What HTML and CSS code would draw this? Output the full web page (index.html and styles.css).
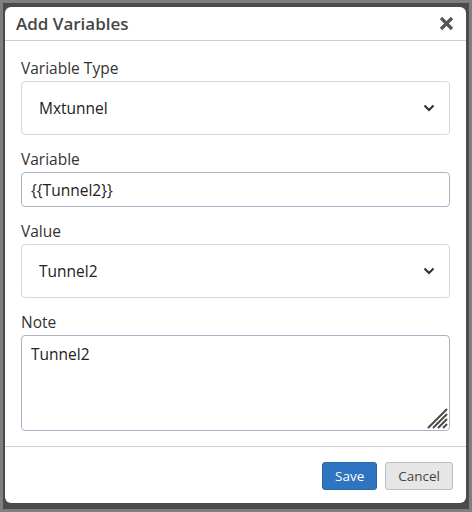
FILE: index.html
```html
<!DOCTYPE html>
<html lang="en">
<head>
    <meta charset="UTF-8">
    <meta name="viewport" content="width=device-width, initial-scale=1.0">
    <title>Add Variables</title>
    <link rel="stylesheet" href="styles.css">
</head>
<body>
    <div class="backdrop">
        <div class="modal">
            <div class="modal-header">
                <h2>Add Variables</h2>
                <svg class="close" width="15" height="15" viewBox="0 0 15 15"><path d="M2 2 L13 13 M13 2 L2 13" stroke="#555" stroke-width="3.2"/></svg>
            </div>

            <div class="modal-body">
                <div class="field">
                    <label>Variable Type</label>
                    <div class="select">
                        <span>Mxtunnel</span>
                        <svg class="chevron" width="12" height="8" viewBox="0 0 12 8"><path d="M1.5 1.5 L6 6 L10.5 1.5" fill="none" stroke="#2b2f3a" stroke-width="2"/></svg>
                    </div>
                </div>

                <div class="field">
                    <label>Variable</label>
                    <div class="input">{{Tunnel2}}</div>
                </div>

                <div class="field">
                    <label>Value</label>
                    <div class="select">
                        <span>Tunnel2</span>
                        <svg class="chevron" width="12" height="8" viewBox="0 0 12 8"><path d="M1.5 1.5 L6 6 L10.5 1.5" fill="none" stroke="#2b2f3a" stroke-width="2"/></svg>
                    </div>
                </div>

                <div class="field">
                    <label>Note</label>
                    <div class="textarea">
                        Tunnel2
                        <svg class="grip" width="22" height="22" viewBox="0 0 22 22">
                            <path d="M21 2 L2 21 M21 7 L7 21 M21 12 L12 21 M21 17 L17 21" stroke="#4a4a4a" stroke-width="2"/>
                        </svg>
                    </div>
                </div>
            </div>

            <div class="modal-footer">
                <button class="btn btn-primary">Save</button>
                <button class="btn btn-default">Cancel</button>
            </div>
        </div>
    </div>
</body>
</html>
```

FILE: styles.css
```css
html, body {
    margin: 0;
    height: 100%;
}
body {
    font-family: 'Open Sans', 'Liberation Sans', sans-serif;
    background-color: #7f7f7f;
    padding: 3px;
    box-sizing: border-box;
}
.backdrop {
    background-color: #4b4b4b;
    height: 100%;
    padding: 4px 3px 6px 2px;
    box-sizing: border-box;
}
.modal {
    background: white;
    border-radius: 6px;
    height: 100%;
    display: flex;
    flex-direction: column;
}
.modal-header {
    display: flex;
    align-items: center;
    justify-content: space-between;
    height: 33px;
    padding: 0 12px 0 11px;
    border-bottom: 1px solid #cfcfcf;
}
.modal-header h2 {
    margin: 0;
    font-size: 17px;
    font-weight: 600;
    color: #474747;
}
.modal-body {
    padding: 17px 16px 15px 16px;
    border-bottom: 1px solid #d0d0d0;
}
.field {
    margin-bottom: 14px;
}
.field:last-child {
    margin-bottom: 0;
}
label {
    display: block;
    font-size: 15.5px;
    color: #333;
    line-height: 20px;
    margin-bottom: 3px;
}
.select {
    height: 54px;
    border: 1px solid #d3d9e2;
    border-radius: 4px;
    display: flex;
    align-items: center;
    justify-content: space-between;
    padding: 0 14px 0 17px;
    font-size: 15.5px;
    color: #222;
    box-sizing: border-box;
}
.input {
    height: 35px;
    border: 1px solid #a9b5c6;
    border-radius: 4px;
    padding: 0 9px;
    display: flex;
    align-items: center;
    font-size: 15.5px;
    color: #222;
    box-sizing: border-box;
}
.textarea {
    position: relative;
    height: 96px;
    border: 1px solid #a9b5c6;
    border-radius: 4px;
    padding: 7px 9px;
    font-size: 15.5px;
    color: #222;
    box-sizing: border-box;
}
.grip {
    position: absolute;
    right: 1px;
    bottom: 1px;
}
.modal-footer {
    display: flex;
    justify-content: flex-end;
    gap: 8px;
    padding: 15px 13px 0 0;
}
.btn {
    font-family: 'Open Sans', 'Liberation Sans', sans-serif;
    font-size: 13.5px;
    height: 28px;
    border-radius: 3px;
    padding: 0 12px;
    cursor: pointer;
}
.btn-primary {
    background-color: #2f74c0;
    border: 1px solid #2a65a8;
    color: white;
}
.btn-default {
    background-color: #e6e6e6;
    border: 1px solid #bdbdbd;
    color: #444;
}
```
